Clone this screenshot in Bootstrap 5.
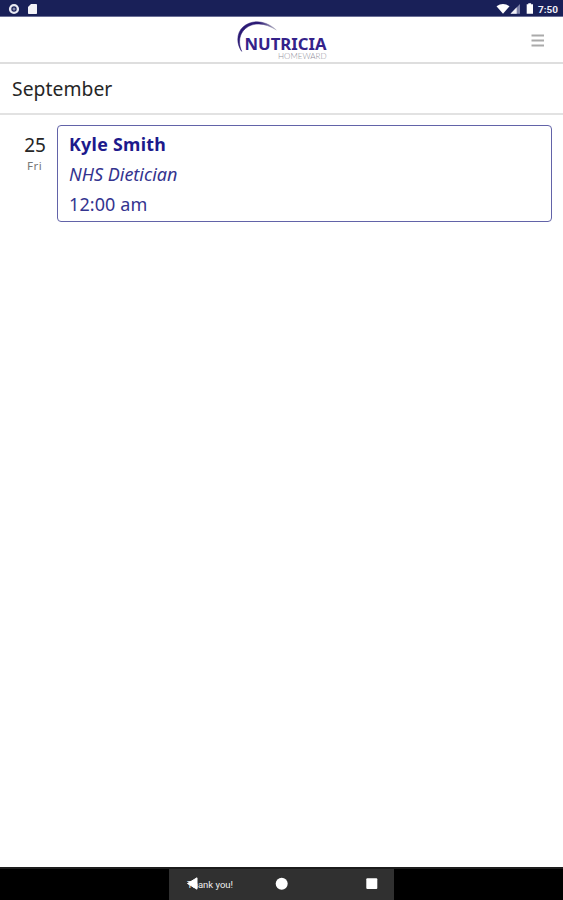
<!DOCTYPE html>
<html lang="en">
<head>
<meta charset="utf-8">
<meta name="viewport" content="width=device-width, initial-scale=1">
<title>Nutricia Homeward</title>
<link href="https://cdn.jsdelivr.net/npm/bootstrap@5.3.0/dist/css/bootstrap.min.css" rel="stylesheet">
<style>
body{font-family:"Noto Sans","Open Sans",sans-serif;font-size:19px;color:#262626;height:900px;overflow:hidden;background:#fff}
.status-bar{height:17px;background:#192058;border-bottom:1px solid #6b6f96}
.app-bar{height:47px;border-bottom:2px solid #dedede}
.month-bar{height:51px;border-bottom:2px solid #e2e2e2;padding-left:12px;line-height:50px;font-size:19.3px;letter-spacing:.05px}
.day-row{padding:10px 11px 0 0}
.day-col{width:57px;padding:6px 11px 0 0;line-height:28px}
.day-name{font-size:11.5px;line-height:14px;color:#777;padding-right:4px;letter-spacing:.4px}
.visit{height:97px;border:1.5px solid #6263a8;border-radius:4px;padding:3px 11px;color:#34348f;font-size:18px}
.visit div{line-height:30px;height:30px;white-space:nowrap}
.visit .who{color:#1c1a8c;font-size:17.8px;letter-spacing:.3px}
.visit .time{letter-spacing:.1px}
.nav-strip{height:33px;background:#000;border-top:2px solid #1c1c1c}
.nav-pad{width:225px;background:#303030}
.nav-pad svg,.status-bar svg,.app-bar svg{display:block}
</style>
<script src="https://cdn.jsdelivr.net/npm/bootstrap@5.3.0/dist/js/bootstrap.bundle.min.js"></script>
</head>
<body class="d-flex flex-column m-0">
<header class="flex-shrink-0">
  <div class="status-bar d-flex justify-content-between">
    <svg width="45" height="16" viewBox="0 0 45 16"><circle cx="14" cy="9" r="3.9" fill="#192058" stroke="#e8e9f2" stroke-width="2.4"/><circle cx="14" cy="9" r="1.5" fill="#8286ac"/><path d="M31 4h5.300q.7 0 .7.7v8.600q0 .7-.7.7h-7.600q-.7 0-.7-.7V7z" fill="#f3f3f8"/></svg>
    <svg width="70" height="16" viewBox="0 0 70 16"><path d="M3.500 6.200Q10 1.600 16.500 6.200L10 13.800z" fill="#fff"/><path d="M27 4v9.800H17.500z" fill="#7e82a8"/><path d="M23.700 7.300v6.500h-6.200z" fill="#f1f1f7"/><path d="M33.700 4.300h1.600V3.200h2.800v1.100H40v9.500h-6.300z" fill="#fff"/><text x="45" y="12.700" font-family="Roboto,sans-serif" font-size="9.700" font-weight="700" fill="#eeeef6" textLength="20" lengthAdjust="spacingAndGlyphs">7:50</text></svg>
  </div>
  <nav class="app-bar d-flex justify-content-between">
    <span class="day-col p-0"></span>
    <svg width="96" height="45" viewBox="234 17 96 45" role="img" aria-label="Nutricia Homeward"><defs><linearGradient id="arc" x1="0" x2="1"><stop offset=".55" stop-color="#2b1a75"/><stop offset="1" stop-color="#b9b9c4"/></linearGradient></defs><path d="M241.700 51.400C236.300 44 236.300 33 243 27C252 19 266 20.500 276.300 30C265 22.500 253 22 245.500 28.500C239 34 238 43 241.700 51.400Z" fill="url(#arc)" stroke="url(#arc)" stroke-width=".5"/><text x="244.500" y="50" font-family="Noto Sans,sans-serif" font-size="16.500" font-weight="700" fill="#34228a" textLength="82" lengthAdjust="spacingAndGlyphs">NUTRICIA</text><text x="278" y="58.500" font-family="Lato,sans-serif" font-size="7.600" font-weight="300" fill="#8f8f9b" textLength="48.500" lengthAdjust="spacingAndGlyphs">HOMEWARD</text></svg>
    <svg width="57" height="45" viewBox="506 17 57 45"><path d="M531.500 35.500h12.500M531.500 40.500h12.500M531.500 45.500h12.500" stroke="#aaa" stroke-width="1.900"/></svg>
  </nav>
  <div class="month-bar">September</div>
</header>
<main class="day-row d-flex flex-grow-1 align-items-start">
  <div class="day-col text-end"><div>25</div><div class="day-name">Fri</div></div>
  <article class="visit flex-grow-1">
    <div class="who fw-bold">Kyle Smith</div>
    <div class="fst-italic role">NHS Dietician</div>
    <div class="time">12:00 am</div>
  </article>
</main>
<footer class="nav-strip d-flex justify-content-center flex-shrink-0">
  <div class="nav-pad"><svg width="225" height="31" viewBox="169 869 225 31"><text x="187" y="887.500" font-family="Roboto,sans-serif" font-size="9.500" fill="#eee" textLength="46" lengthAdjust="spacingAndGlyphs">Thank you!</text><path d="M187.500 883.500L197 877.800V889.200Z" fill="#fff" stroke="#fff" stroke-linejoin="round"/><circle cx="281.700" cy="883.700" r="6" fill="#fff"/><rect x="366.300" y="878.300" width="11" height="10.800" rx="1" fill="#fff"/></svg></div>
</footer>
</body>
</html>
